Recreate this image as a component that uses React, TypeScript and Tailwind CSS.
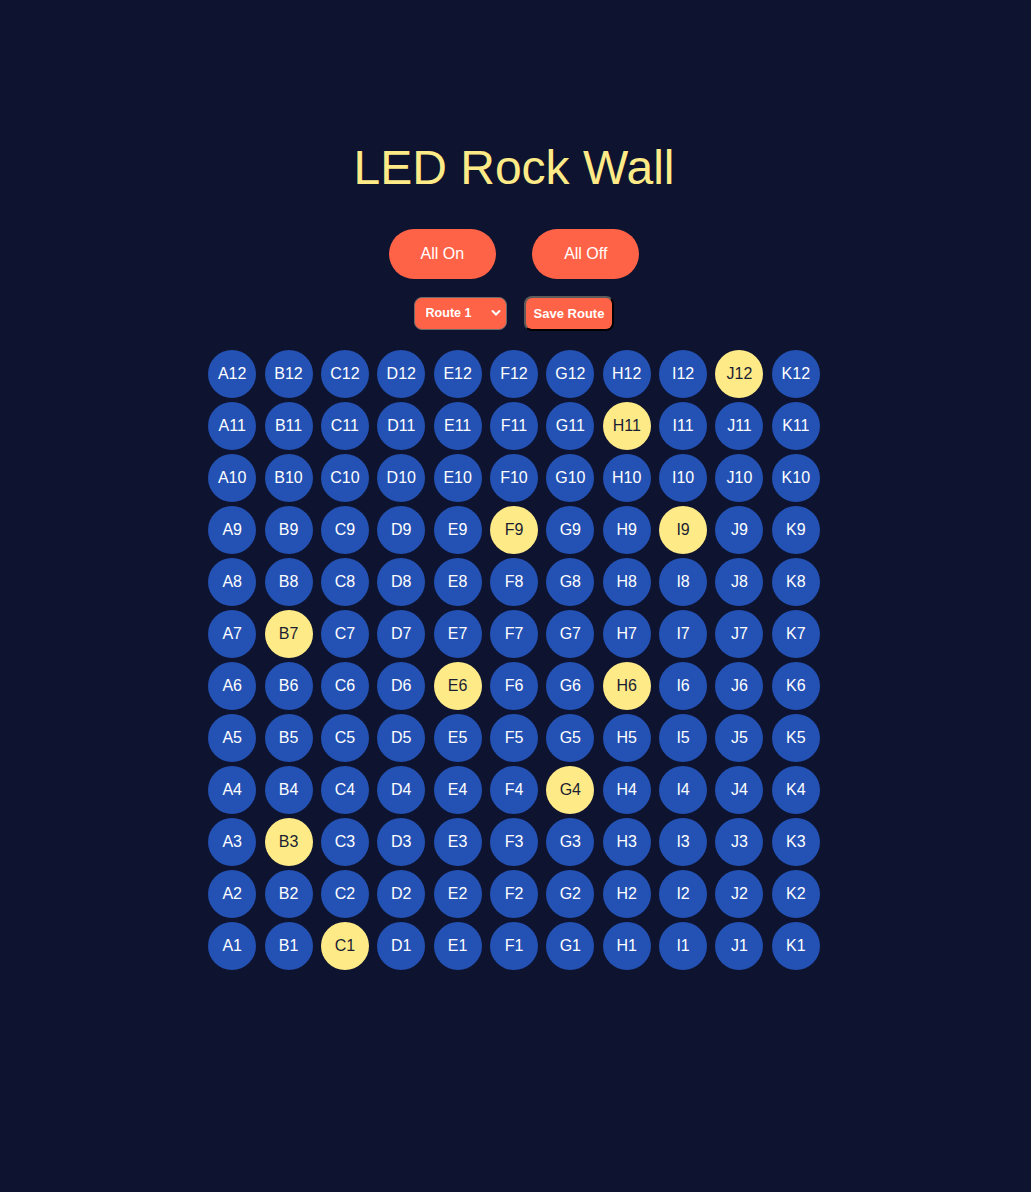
import React, { useState } from 'react';

const COLS = ['A', 'B', 'C', 'D', 'E', 'F', 'G', 'H', 'I', 'J', 'K'];
const ROWS = [12, 11, 10, 9, 8, 7, 6, 5, 4, 3, 2, 1];
const LIT = ['J12', 'H11', 'F9', 'I9', 'B7', 'E6', 'H6', 'G4', 'B3', 'C1'];

const Hold: React.FC<{ id: string; on: boolean; onToggle: () => void }> = ({ id, on, onToggle }) => (
  <button
    onClick={onToggle}
    className={
      on
        ? 'w-12 h-12 rounded-full bg-[#feeb87] text-[#1b1d33] text-base flex items-center justify-center'
        : 'w-12 h-12 rounded-full bg-[#2452b4] text-white text-base flex items-center justify-center'
    }
  >
    {id}
  </button>
);

const App: React.FC = () => {
  const [lit, setLit] = useState<string[]>(LIT);

  const toggle = (id: string) =>
    setLit(prev => (prev.includes(id) ? prev.filter(x => x !== id) : [...prev, id]));

  const all = ROWS.flatMap(r => COLS.map(c => `${c}${r}`));

  return (
    <main
      className="min-h-screen bg-[#0e1330] flex flex-col items-center pt-[141px] pr-[3px]"
      style={{ fontFamily: '"Liberation Sans", Arial, sans-serif' }}
    >
      <h1 className="text-[48px] leading-[54px] text-[#feeb87]">LED Rock Wall</h1>

      <div className="flex gap-9 mt-[34px]">
        <button
          onClick={() => setLit(all)}
          className="bg-[#ff6347] text-white text-base leading-[18px] py-4 px-8 rounded-full"
        >
          All On
        </button>
        <button
          onClick={() => setLit([])}
          className="bg-[#ff6347] text-white text-base leading-[18px] py-4 px-8 rounded-full"
        >
          All Off
        </button>
      </div>

      <div className="flex items-center gap-[17px] mt-[17px]">
        <div className="relative">
          <select className="appearance-none w-[93px] h-[33px] pl-[11px] bg-[#ff6347] text-white text-[12.5px] font-bold border border-[#6b6b6b] rounded-lg outline-none">
            <option>Route 1</option>
            <option>Route 2</option>
            <option>Route 3</option>
          </select>
          <svg
            className="absolute right-[6px] top-[12px] pointer-events-none"
            width="10"
            height="8"
            viewBox="0 0 10 8"
          >
            <path d="M1.5 2 L5 5.5 L8.5 2" stroke="white" strokeWidth="2" fill="none" strokeLinecap="round" />
          </svg>
        </div>
        <button className="bg-[#ff6347] text-white text-[13px] leading-[15px] font-bold px-2 py-2 rounded-lg border-2 border-t-[#5c5c5c] border-l-[#5c5c5c] border-b-black border-r-black">
          Save Route
        </button>
      </div>

      <div className="grid grid-cols-11 gap-y-1 w-[620px] justify-items-center mt-[19px]">
        {all.map(id => (
          <Hold key={id} id={id} on={lit.includes(id)} onToggle={() => toggle(id)} />
        ))}
      </div>
    </main>
  );
};

export default App;
